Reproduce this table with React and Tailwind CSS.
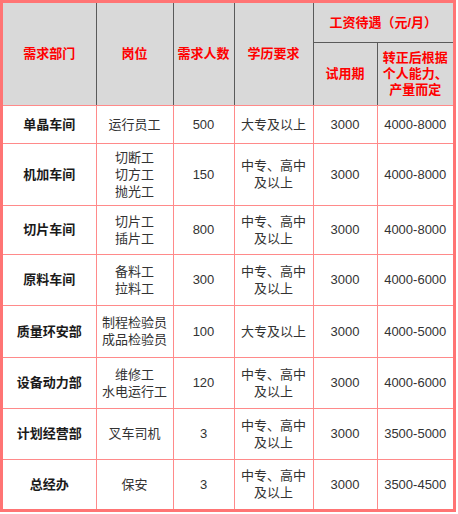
const rows = [
  { dept: "单晶车间", jobs: ["运行员工"], count: "500", edu: ["大专及以上"], trial: "3000", after: "4000-8000", h: "h-[38px]" },
  { dept: "机加车间", jobs: ["切断工", "切方工", "抛光工"], count: "150", edu: ["中专、高中", "及以上"], trial: "3000", after: "4000-8000", h: "h-[62px]" },
  { dept: "切片车间", jobs: ["切片工", "插片工"], count: "800", edu: ["中专、高中", "及以上"], trial: "3000", after: "4000-8000", h: "h-[49px]" },
  { dept: "原料车间", jobs: ["备料工", "拉料工"], count: "300", edu: ["中专、高中", "及以上"], trial: "3000", after: "4000-6000", h: "h-[51px]" },
  { dept: "质量环安部", jobs: ["制程检验员", "成品检验员"], count: "100", edu: ["大专及以上"], trial: "3000", after: "4000-5000", h: "h-[52px]" },
  { dept: "设备动力部", jobs: ["维修工", "水电运行工"], count: "120", edu: ["中专、高中", "及以上"], trial: "3000", after: "4000-6000", h: "h-[51px]" },
  { dept: "计划经营部", jobs: ["叉车司机"], count: "3", edu: ["中专、高中", "及以上"], trial: "3000", after: "3500-5000", h: "h-[51px]" },
  { dept: "总经办", jobs: ["保安"], count: "3", edu: ["中专、高中", "及以上"], trial: "3000", after: "3500-4500", h: "h-[50px]" },
];

function Lines({ items }) {
  return items.map((t, i) => (
    <span key={i} className="block">
      {t}
    </span>
  ));
}

export default function App() {
  const head = "border border-[#5a5a5a] font-bold text-[#ff0000] text-center align-middle p-0";
  const cell = "border border-[#ff8a8a] text-center align-middle p-0";

  return (
    <div
      className="w-[456px] bg-white"
      style={{ fontFamily: '"Liberation Sans", "Noto Sans CJK SC", sans-serif' }}
    >
      <div className="border-[3px] border-[#ff7474] w-[456px]">
        <table className="table-fixed w-[450px] border-collapse border-hidden text-[13px] leading-[17px]">
          <colgroup>
            <col className="w-[93px]" />
            <col className="w-[77px]" />
            <col className="w-[61px]" />
            <col className="w-[79px]" />
            <col className="w-[64px]" />
            <col className="w-[76px]" />
          </colgroup>
          <thead className="bg-[#d9d9d9]">
            <tr className="h-[39px]">
              <th rowSpan={2} className={`${head} border-b-[#ff8a8a]`}>需求部门</th>
              <th rowSpan={2} className={`${head} border-b-[#ff8a8a]`}>岗位</th>
              <th rowSpan={2} className={`${head} border-b-[#ff8a8a]`}>需求人数</th>
              <th rowSpan={2} className={`${head} border-b-[#ff8a8a]`}>学历要求</th>
              <th colSpan={2} className={head}>工资待遇（元/月）</th>
            </tr>
            <tr className="h-[63px]">
              <th className={`${head} border-b-[#ff8a8a]`}>试用期</th>
              <th className={`${head} border-b-[#ff8a8a] leading-[16px]`}>
                <Lines items={["转正后根据", "个人能力、", "产量而定"]} />
              </th>
            </tr>
          </thead>
          <tbody className="text-[#333333]">
            {rows.map((r) => (
              <tr key={r.dept} className={r.h}>
                <td className={`${cell} font-bold text-[#1a1a1a]`}>{r.dept}</td>
                <td className={cell}>
                  <Lines items={r.jobs} />
                </td>
                <td className={cell}>{r.count}</td>
                <td className={cell}>
                  <Lines items={r.edu} />
                </td>
                <td className={cell}>{r.trial}</td>
                <td className={cell}>{r.after}</td>
              </tr>
            ))}
          </tbody>
        </table>
      </div>
    </div>
  );
}
